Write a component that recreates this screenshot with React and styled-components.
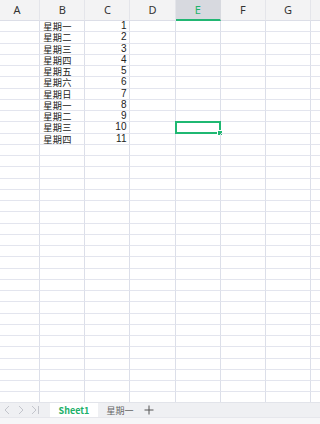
import React from "react";
import styled, { createGlobalStyle } from "styled-components";

const Global = createGlobalStyle`
  html, body { margin: 0; padding: 0; background: #fff; }
  body { width: 320px; height: 424px; overflow: hidden; font-family: "Liberation Sans", "Noto Sans CJK SC", sans-serif; }
  * { box-sizing: border-box; }
`;

const Page = styled.div`
  display: flex;
  flex-direction: column;
  width: 320px;
  height: 424px;
  overflow: hidden;
`;

const Sheet = styled.div`
  flex: 1;
  overflow: hidden;
  margin-left: -5px;
`;

const HeaderRow = styled.div`
  display: grid;
  grid-template-columns: repeat(8, 45.17px);
  height: 21px;
  background: #f3f3f4;
  border-bottom: 1px solid #dcdee7;
`;

const HeaderCell = styled.div`
  display: flex;
  align-items: center;
  justify-content: center;
  font-family: "Noto Sans", "Liberation Sans", sans-serif;
  font-size: 11px;
  color: ${(p) => (p.$active ? "#1db36c" : "#333")};
  background: ${(p) => (p.$active ? "#d7d9df" : "transparent")};
  border-right: 1px solid ${(p) => (p.$active ? "#d7d9df" : "#e4e5ea")};
  border-bottom: 2px solid ${(p) => (p.$active ? "#22b673" : "transparent")};
  margin-bottom: -1px;
`;

const Row = styled.div`
  display: grid;
  grid-template-columns: repeat(8, 45.17px);
  height: 11.25px;
`;

const Cell = styled.div`
  position: relative;
  display: flex;
  align-items: center;
  justify-content: ${(p) => (p.$num ? "flex-end" : "flex-start")};
  height: 11.25px;
  border-right: 1px solid #dcdfe9;
  border-bottom: 1px solid #e3e5ee;
  color: #222;
  padding: 0 3px;
  white-space: nowrap;
`;

const CellText = styled.span`
  line-height: 10px;
  font-family: ${(p) => (p.$num ? '"Liberation Sans", sans-serif' : '"Noto Sans CJK SC", sans-serif')};
  font-size: ${(p) => (p.$num ? "10px" : "9.2px")};
  letter-spacing: ${(p) => (p.$num ? "0" : "0.3px")};
`;

const Selection = styled.div`
  position: absolute;
  left: -1px;
  top: -1px;
  right: -1px;
  bottom: -1px;
  border: 2px solid #1fb872;
  &::after {
    content: "";
    position: absolute;
    right: -4px;
    bottom: -4px;
    width: 4px;
    height: 4px;
    background: #1fb872;
    border: 1px solid #fff;
  }
`;

const TabBar = styled.div`
  display: flex;
  align-items: stretch;
  height: 15px;
  background: #eff0f3;
  border-top: 1px solid #e2e4ea;
`;

const Nav = styled.div`
  display: flex;
  align-items: center;
  gap: 6px;
  width: 50px;
  padding-left: 3px;
  color: #c3c5cc;
`;

const Tab = styled.div`
  display: flex;
  align-items: center;
  justify-content: center;
  width: ${(p) => p.$w}px;
  background: ${(p) => (p.$active ? "#fff" : "transparent")};
  color: ${(p) => (p.$active ? "#1cb06a" : "#666")};
  font-weight: ${(p) => (p.$active ? 700 : 400)};
  font-family: "Noto Sans CJK SC", "Liberation Sans", sans-serif;
  font-size: 9px;
`;

const Plus = styled.div`
  display: flex;
  align-items: center;
  padding-left: 2px;
  color: #555;
`;

const Footer = styled.div`
  height: 7px;
  background: #f6f6f8;
  border-top: 1px solid #e6e7ec;
`;

const cols = ["A", "B", "C", "D", "E", "F", "G", "H"];
const days = ["星期一", "星期二", "星期三", "星期四", "星期五", "星期六", "星期日", "星期一", "星期二", "星期三", "星期四"];

const Chevron = ({ d }) => (
  <svg width="8" height="10" viewBox="0 0 8 10" fill="none" stroke="currentColor" strokeWidth="1">
    <path d={d} />
  </svg>
);

export default function App() {
  const rows = Array.from({ length: 36 }, (_, i) => i);
  return (
    <Page>
      <Global />
      <Sheet>
        <HeaderRow>
          {cols.map((c) => (
            <HeaderCell key={c} $active={c === "E"}>{c === "H" ? "" : c}</HeaderCell>
          ))}
        </HeaderRow>
        {rows.map((r) => (
          <Row key={r}>
            {cols.map((c) => (
              <Cell key={c} $num={c === "C"}>
                {c === "B" && r < days.length ? <CellText>{days[r]}</CellText> : null}
                {c === "C" && r < days.length ? <CellText $num>{r + 1}</CellText> : null}
                {c === "E" && r === 9 ? <Selection /> : null}
              </Cell>
            ))}
          </Row>
        ))}
      </Sheet>
      <TabBar>
        <Nav>
          <Chevron d="M6 1 L2 5 L6 9" />
          <Chevron d="M2 1 L6 5 L2 9" />
          <svg width="9" height="10" viewBox="0 0 9 10" fill="none" stroke="currentColor" strokeWidth="1">
            <path d="M1 1 L5 5 L1 9 M7.5 1 V9" />
          </svg>
        </Nav>
        <Tab $active $w={48}>Sheet1</Tab>
        <Tab $w={44}>星期一</Tab>
        <Plus>
          <svg width="10" height="10" viewBox="0 0 10 10" stroke="currentColor" strokeWidth="1">
            <path d="M5 0.5 V9.5 M0.5 5 H9.5" />
          </svg>
        </Plus>
      </TabBar>
      <Footer />
    </Page>
  );
}
